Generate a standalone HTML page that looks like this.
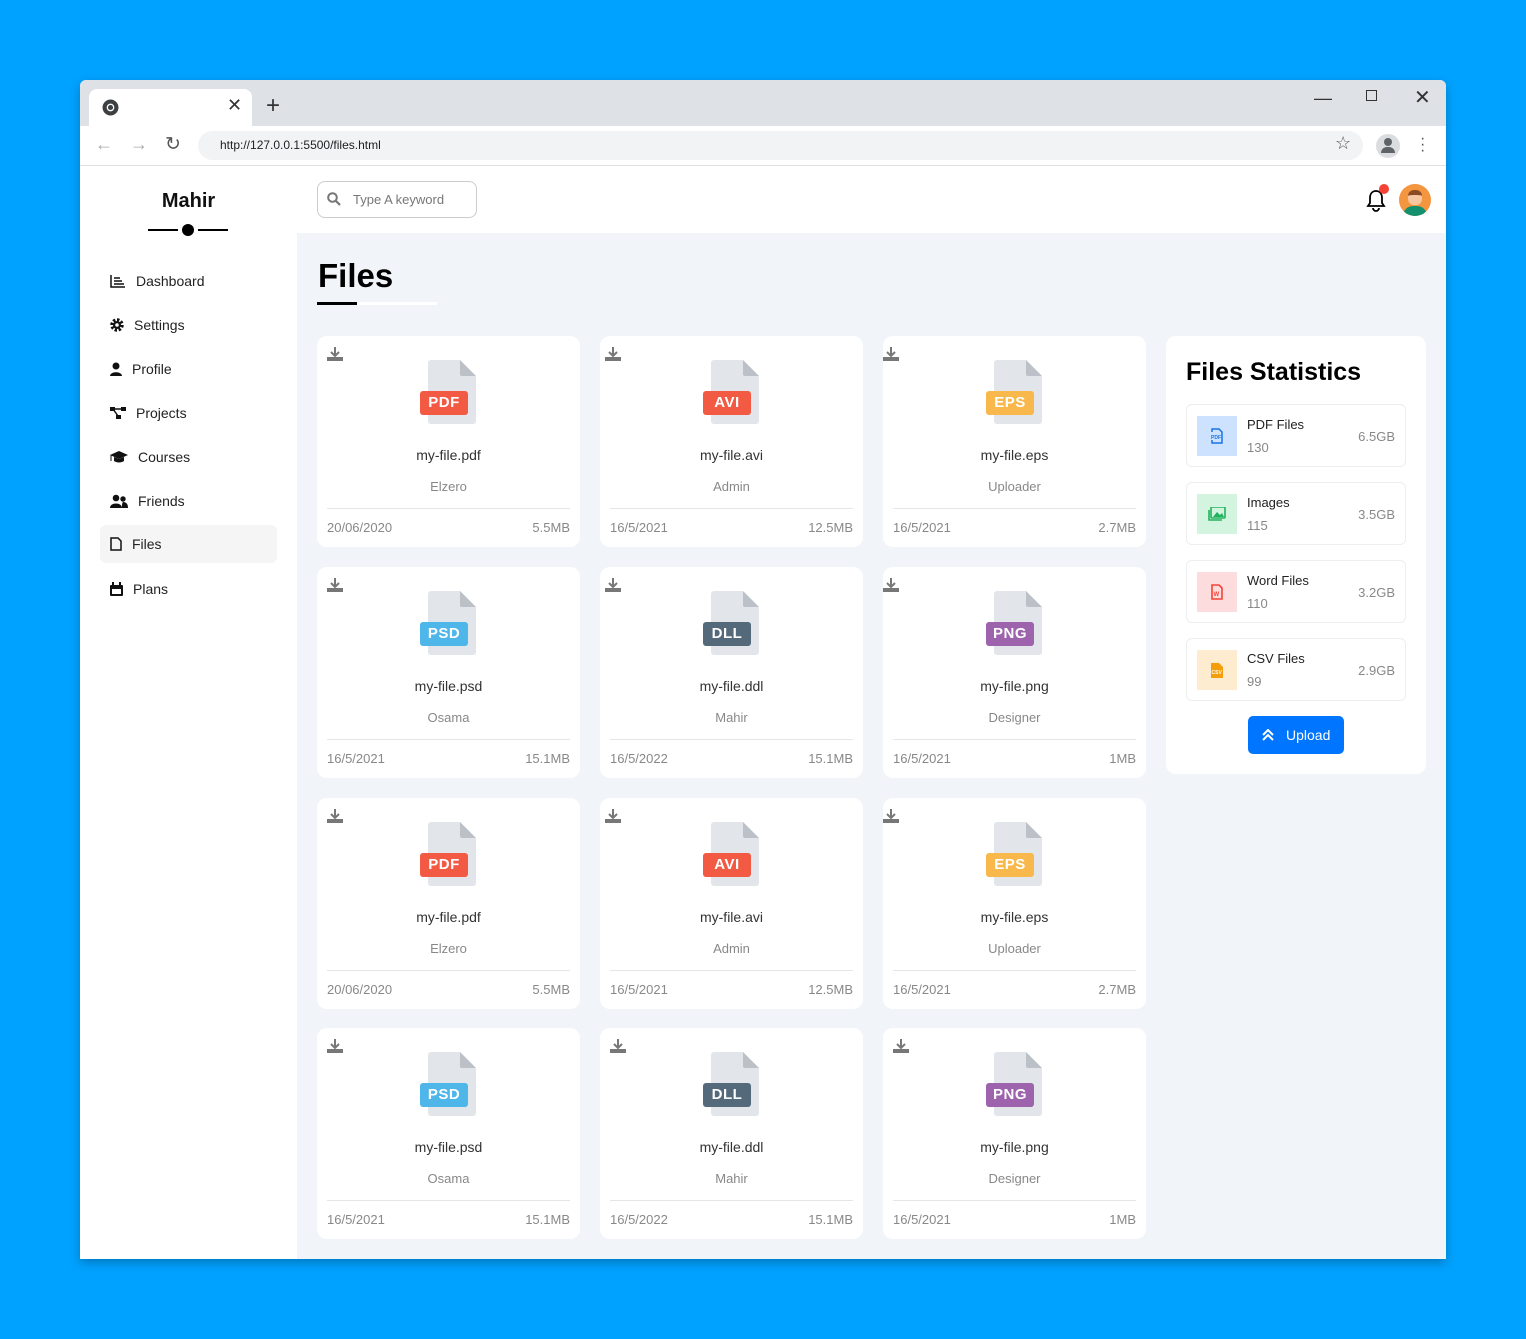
<!DOCTYPE html>
<html><head><meta charset="utf-8"><style>
*{box-sizing:border-box;margin:0;padding:0}
body{width:1526px;height:1339px;background:#00a2ff;font-family:"Liberation Sans",sans-serif;position:relative;overflow:hidden}
.win{position:absolute;left:80px;top:80px;width:1366px;height:1179px;background:#f1f5f9;box-shadow:0 4px 10px rgba(0,0,0,.25);border-radius:6px 6px 0 0;overflow:hidden}
.abs{position:absolute}
.tabbar{left:0;top:0;width:1366px;height:46px;background:#dee1e6}
.tab{left:9px;top:9px;width:163px;height:37px;background:#fff;border-radius:8px 8px 0 0}
.addr{left:0;top:46px;width:1366px;height:40px;background:#fff;border-bottom:1px solid #e0e0e0}
.pill{left:118px;top:5px;width:1165px;height:29px;background:#f1f3f4;border-radius:15px;font-size:12px;color:#202124;padding:7px 0 0 22px}
.side{left:0;top:86px;width:217px;height:1093px;background:#fff}
.nav{position:absolute;left:20px;width:177px;height:38px;font-size:14px;color:#222;display:flex;align-items:center;padding-left:10px;border-radius:6px}
.nav svg{margin-right:10px}
.head{left:217px;top:86px;width:1149px;height:67px;background:#fff}
.card{position:absolute;width:263px;height:211px;background:#fff;border-radius:10px}
.dl{position:absolute;left:10px;top:11px}
.c2 .dl{left:5px}
.c3 .dl{left:0}
.doc{position:absolute;left:111px;top:24px;width:48px;height:64px;background:#e2e5e9;border-radius:3px;clip-path:polygon(0 0,32px 0,48px 16px,48px 64px,0 64px)}
.fold{position:absolute;left:143px;top:24px;width:16px;height:16px;background:#bcc1c8;clip-path:polygon(0 0,100% 100%,0 100%);border-radius:0 0 0 2px}
.bd{position:absolute;left:103px;top:55px;width:48px;height:24px;border-radius:3px;color:#fff;font-weight:bold;font-size:15px;text-align:center;line-height:24px;letter-spacing:.5px}
.nm{position:absolute;left:0;width:263px;top:111px;text-align:center;font-size:14px;color:#333}
.sb{position:absolute;left:0;width:263px;top:143px;text-align:center;font-size:13px;color:#888}
.ln{position:absolute;left:10px;right:10px;top:172px;border-top:1px solid #e6e6e6}
.ft{position:absolute;left:10px;right:10px;top:184px;font-size:13px;color:#888;display:flex;justify-content:space-between}
.stats{left:1086px;top:256px;width:260px;height:438px;background:#fff;border-radius:10px}
.si{position:absolute;left:20px;width:220px;height:63px;border:1px solid #eee;border-radius:6px}
.si .ic{position:absolute;left:10px;top:11px;width:40px;height:40px;display:flex;align-items:center;justify-content:center}
.si .t{position:absolute;left:60px;top:12px;font-size:13px;color:#222}
.si .c{position:absolute;left:60px;top:35px;font-size:13px;color:#888}
.si .s{position:absolute;right:10px;top:24px;font-size:13px;color:#888}
</style></head><body>
<div class="win">
<div class="abs tabbar"></div>
<div class="abs tab"></div>
<svg class="abs" style="left:22px;top:19px" width="17" height="17" viewBox="0 0 16 16"><circle cx="8" cy="8" r="7.5" fill="#3c4043"/><circle cx="8" cy="8" r="3.6" fill="#fff"/><circle cx="8" cy="8" r="2.4" fill="#3c4043"/></svg>
<div class="abs" style="left:147px;top:15px;font-size:18px;color:#333">✕</div>
<div class="abs" style="left:186px;top:12px;font-size:24px;color:#333">+</div>
<div class="abs" style="left:1234px;top:8px;font-size:18px;color:#333">—</div>
<div class="abs" style="left:1286px;top:10px;width:11px;height:11px;border:1.5px solid #333"></div>
<div class="abs" style="left:1334px;top:5px;font-size:20px;color:#333">✕</div>
<div class="abs addr"><div class="abs pill">http://127.0.0.1:5500/files.html</div>
<div class="abs" style="left:15px;top:8px;font-size:18px;color:#aaa">←</div>
<div class="abs" style="left:50px;top:8px;font-size:18px;color:#aaa">→</div>
<div class="abs" style="left:85px;top:7px;font-size:19px;color:#555">↻</div>
<div class="abs" style="left:1255px;top:7px;font-size:18px;color:#555">☆</div>
<div class="abs" style="left:1296px;top:8px;width:24px;height:24px;border-radius:50%;background:#dadce0"></div>
<div class="abs" style="left:1304px;top:12px;width:8px;height:8px;border-radius:50%;background:#5f6368"></div>
<div class="abs" style="left:1301px;top:21px;width:14px;height:6px;border-radius:7px 7px 0 0;background:#5f6368"></div>
<div class="abs" style="left:1340px;top:10px;font-size:16px;color:#555;line-height:6px">·<br>·<br>·</div>
</div>
<div class="abs side">
<div class="abs" style="left:0;width:217px;top:24px;text-align:center;font-size:20px;font-weight:bold;color:#111">Mahir</div>
<div class="abs" style="left:68px;top:63px;width:30px;height:2px;background:#000"></div>
<div class="abs" style="left:102px;top:58px;width:12px;height:12px;border-radius:50%;background:#000"></div>
<div class="abs" style="left:118px;top:63px;width:30px;height:2px;background:#000"></div>
<div class="nav" style="top:96px"><svg width="16" height="14"><path d="M1 1V13H15M4 4h6M4 7h8M4 10h10" stroke="#111" stroke-width="1.5" fill="none"/></svg>Dashboard</div>
<div class="nav" style="top:140px"><svg width="14" height="14" viewBox="0 0 14 14"><circle cx="7" cy="7" r="5" fill="none" stroke="#111" stroke-width="3.5" stroke-dasharray="2.3 1.6"/><circle cx="7" cy="7" r="4" fill="#111"/><circle cx="7" cy="7" r="1.8" fill="#fff"/></svg>Settings</div>
<div class="nav" style="top:184px"><svg width="12" height="14"><circle cx="6" cy="4" r="3.5" fill="#111"/><path d="M0 14c0-5 12-5 12 0z" fill="#111"/></svg>Profile</div>
<div class="nav" style="top:228px"><svg width="16" height="14"><rect x="0" y="1" width="5" height="4" fill="#111"/><rect x="11" y="1" width="5" height="4" fill="#111"/><rect x="6" y="9" width="5" height="4" fill="#111"/><path d="M3 3h10M3 3l5 7" stroke="#111" stroke-width="1.5"/></svg>Projects</div>
<div class="nav" style="top:272px"><svg width="18" height="14"><path d="M0 5l9-4 9 4-9 4z" fill="#111"/><path d="M4 7v4c3 2 7 2 10 0V7l-5 2z" fill="#111"/><path d="M1 5v6" stroke="#111"/></svg>Courses</div>
<div class="nav" style="top:316px"><svg width="18" height="14"><circle cx="6" cy="4" r="3.3" fill="#111"/><circle cx="13" cy="5" r="2.7" fill="#111"/><path d="M0 14c0-6 12-6 12 0zM12 14c0-3 0-5 1-6 4 0 5 3 5 6z" fill="#111"/></svg>Friends</div>
<div class="nav" style="top:359px;background:#f5f5f5"><svg width="12" height="14"><path d="M1 1h7l3 3v9H1z" fill="none" stroke="#111" stroke-width="1.5"/></svg>Files</div>
<div class="nav" style="top:404px"><svg width="13" height="14"><rect x="0" y="3" width="13" height="11" rx="1" fill="#111"/><rect x="2" y="7" width="9" height="5" fill="#fff"/><path d="M3 0v4M10 0v4" stroke="#111" stroke-width="2"/></svg>Plans</div>
</div>
<div class="abs head">
<div class="abs" style="left:20px;top:15px;width:160px;height:37px;border:1px solid #ccc;border-radius:8px"></div>
<svg class="abs" style="left:30px;top:26px" width="14" height="14"><circle cx="5.5" cy="5.5" r="4.3" stroke="#777" stroke-width="2" fill="none"/><path d="M8.5 8.5l4.5 4.5" stroke="#777" stroke-width="2.2"/></svg>
<div class="abs" style="left:56px;top:26px;font-size:13px;color:#777">Type A keyword</div>
<svg class="abs" style="left:1068px;top:22px" width="22" height="24"><path d="M11 3c-4 0-6 3-6 7v5l-2 3h16l-2-3v-5c0-4-2-7-6-7z" fill="none" stroke="#000" stroke-width="1.8"/><path d="M8 20a3 3 0 006 0" fill="none" stroke="#000" stroke-width="1.8"/></svg>
<div class="abs" style="left:1082px;top:18px;width:10px;height:10px;border-radius:50%;background:#f44336"></div>
<div class="abs" style="left:1102px;top:18px;width:32px;height:32px;border-radius:50%;background:#f4953f;overflow:hidden"><div class="abs" style="left:9px;top:6px;width:14px;height:15px;border-radius:6px;background:#f6c7a0;border-top:5px solid #8a4a22"></div><div class="abs" style="left:4px;top:22px;width:24px;height:14px;border-radius:10px 10px 0 0;background:#13906e"></div></div>
</div>
<div class="abs" style="left:238px;top:177px;font-size:33px;font-weight:bold;color:#000">Files</div>
<div class="abs" style="left:237px;top:222px;width:120px;height:3px;background:#fff"></div>
<div class="abs" style="left:237px;top:222px;width:40px;height:3px;background:#000"></div>

<div class="card" style="left:237px;top:256px"><svg class="dl" width="16" height="14"><path d="M8 0v8M4 5l4 4 4-4" stroke="#777" stroke-width="2" fill="none"/><rect x="0" y="10" width="16" height="4" fill="#777"/></svg><div class="doc"></div><div class="fold"></div><div class="bd" style="background:#f25a43">PDF</div><div class="nm">my-file.pdf</div><div class="sb">Elzero</div><div class="ln"></div><div class="ft"><span>20/06/2020</span><span>5.5MB</span></div></div>
<div class="card c2" style="left:520px;top:256px"><svg class="dl" width="16" height="14"><path d="M8 0v8M4 5l4 4 4-4" stroke="#777" stroke-width="2" fill="none"/><rect x="0" y="10" width="16" height="4" fill="#777"/></svg><div class="doc"></div><div class="fold"></div><div class="bd" style="background:#f25a43">AVI</div><div class="nm">my-file.avi</div><div class="sb">Admin</div><div class="ln"></div><div class="ft"><span>16/5/2021</span><span>12.5MB</span></div></div>
<div class="card c3" style="left:803px;top:256px"><svg class="dl" width="16" height="14"><path d="M8 0v8M4 5l4 4 4-4" stroke="#777" stroke-width="2" fill="none"/><rect x="0" y="10" width="16" height="4" fill="#777"/></svg><div class="doc"></div><div class="fold"></div><div class="bd" style="background:#f8b84b">EPS</div><div class="nm">my-file.eps</div><div class="sb">Uploader</div><div class="ln"></div><div class="ft"><span>16/5/2021</span><span>2.7MB</span></div></div>

<div class="card" style="left:237px;top:487px"><svg class="dl" width="16" height="14"><path d="M8 0v8M4 5l4 4 4-4" stroke="#777" stroke-width="2" fill="none"/><rect x="0" y="10" width="16" height="4" fill="#777"/></svg><div class="doc"></div><div class="fold"></div><div class="bd" style="background:#4eb6e8">PSD</div><div class="nm">my-file.psd</div><div class="sb">Osama</div><div class="ln"></div><div class="ft"><span>16/5/2021</span><span>15.1MB</span></div></div>
<div class="card c2" style="left:520px;top:487px"><svg class="dl" width="16" height="14"><path d="M8 0v8M4 5l4 4 4-4" stroke="#777" stroke-width="2" fill="none"/><rect x="0" y="10" width="16" height="4" fill="#777"/></svg><div class="doc"></div><div class="fold"></div><div class="bd" style="background:#546a7b">DLL</div><div class="nm">my-file.ddl</div><div class="sb">Mahir</div><div class="ln"></div><div class="ft"><span>16/5/2022</span><span>15.1MB</span></div></div>
<div class="card c3" style="left:803px;top:487px"><svg class="dl" width="16" height="14"><path d="M8 0v8M4 5l4 4 4-4" stroke="#777" stroke-width="2" fill="none"/><rect x="0" y="10" width="16" height="4" fill="#777"/></svg><div class="doc"></div><div class="fold"></div><div class="bd" style="background:#9d63ac">PNG</div><div class="nm">my-file.png</div><div class="sb">Designer</div><div class="ln"></div><div class="ft"><span>16/5/2021</span><span>1MB</span></div></div>

<div class="card" style="left:237px;top:718px"><svg class="dl" width="16" height="14"><path d="M8 0v8M4 5l4 4 4-4" stroke="#777" stroke-width="2" fill="none"/><rect x="0" y="10" width="16" height="4" fill="#777"/></svg><div class="doc"></div><div class="fold"></div><div class="bd" style="background:#f25a43">PDF</div><div class="nm">my-file.pdf</div><div class="sb">Elzero</div><div class="ln"></div><div class="ft"><span>20/06/2020</span><span>5.5MB</span></div></div>
<div class="card c2" style="left:520px;top:718px"><svg class="dl" width="16" height="14"><path d="M8 0v8M4 5l4 4 4-4" stroke="#777" stroke-width="2" fill="none"/><rect x="0" y="10" width="16" height="4" fill="#777"/></svg><div class="doc"></div><div class="fold"></div><div class="bd" style="background:#f25a43">AVI</div><div class="nm">my-file.avi</div><div class="sb">Admin</div><div class="ln"></div><div class="ft"><span>16/5/2021</span><span>12.5MB</span></div></div>
<div class="card c3" style="left:803px;top:718px"><svg class="dl" width="16" height="14"><path d="M8 0v8M4 5l4 4 4-4" stroke="#777" stroke-width="2" fill="none"/><rect x="0" y="10" width="16" height="4" fill="#777"/></svg><div class="doc"></div><div class="fold"></div><div class="bd" style="background:#f8b84b">EPS</div><div class="nm">my-file.eps</div><div class="sb">Uploader</div><div class="ln"></div><div class="ft"><span>16/5/2021</span><span>2.7MB</span></div></div>

<div class="card" style="left:237px;top:948px"><svg class="dl" width="16" height="14"><path d="M8 0v8M4 5l4 4 4-4" stroke="#777" stroke-width="2" fill="none"/><rect x="0" y="10" width="16" height="4" fill="#777"/></svg><div class="doc"></div><div class="fold"></div><div class="bd" style="background:#4eb6e8">PSD</div><div class="nm">my-file.psd</div><div class="sb">Osama</div><div class="ln"></div><div class="ft"><span>16/5/2021</span><span>15.1MB</span></div></div>
<div class="card" style="left:520px;top:948px"><svg class="dl" width="16" height="14"><path d="M8 0v8M4 5l4 4 4-4" stroke="#777" stroke-width="2" fill="none"/><rect x="0" y="10" width="16" height="4" fill="#777"/></svg><div class="doc"></div><div class="fold"></div><div class="bd" style="background:#546a7b">DLL</div><div class="nm">my-file.ddl</div><div class="sb">Mahir</div><div class="ln"></div><div class="ft"><span>16/5/2022</span><span>15.1MB</span></div></div>
<div class="card" style="left:803px;top:948px"><svg class="dl" width="16" height="14"><path d="M8 0v8M4 5l4 4 4-4" stroke="#777" stroke-width="2" fill="none"/><rect x="0" y="10" width="16" height="4" fill="#777"/></svg><div class="doc"></div><div class="fold"></div><div class="bd" style="background:#9d63ac">PNG</div><div class="nm">my-file.png</div><div class="sb">Designer</div><div class="ln"></div><div class="ft"><span>16/5/2021</span><span>1MB</span></div></div>

<div class="abs stats">
<div class="abs" style="left:20px;top:22px;font-size:25px;font-weight:bold;color:#000">Files Statistics</div>
<div class="si" style="top:68px"><div class="ic" style="background:#cce2fe"><svg width="12" height="16"><path d="M1 4V1h7l3 3v11H1v-3" fill="none" stroke="#1a73e8" stroke-width="1.5"/><text x="0" y="11" font-size="5" font-weight="bold" fill="#1a73e8" font-family="Liberation Sans">PDF</text></svg></div><div class="t">PDF Files</div><div class="c">130</div><div class="s">6.5GB</div></div>
<div class="si" style="top:146px"><div class="ic" style="background:#d3f4de"><svg width="18" height="14"><rect x="3" y="0" width="14" height="11" rx="1" fill="none" stroke="#22b35e" stroke-width="1.6"/><path d="M1 3v10h13" fill="none" stroke="#22b35e" stroke-width="1.6"/><path d="M5 10l4-5 3 3 2-2 2 4z" fill="#22b35e"/></svg></div><div class="t">Images</div><div class="c">115</div><div class="s">3.5GB</div></div>
<div class="si" style="top:224px"><div class="ic" style="background:#fcdcdc"><svg width="12" height="16"><path d="M1 1h7l3 3v11H1z" fill="none" stroke="#f44336" stroke-width="1.6"/><text x="2.5" y="12" font-size="6" font-weight="bold" fill="#f44336" font-family="Liberation Sans">W</text></svg></div><div class="t">Word Files</div><div class="c">110</div><div class="s">3.2GB</div></div>
<div class="si" style="top:302px"><div class="ic" style="background:#feecd0"><svg width="12" height="16"><path d="M0 1h8l4 4v11H0z" fill="#f59e0b"/><text x="0.5" y="12" font-size="5" font-weight="bold" fill="#fff" font-family="Liberation Sans">CSV</text></svg></div><div class="t">CSV Files</div><div class="c">99</div><div class="s">2.9GB</div></div>
<div class="abs" style="left:82px;top:380px;width:96px;height:38px;background:#0075ff;border-radius:5px;color:#fff;font-size:14px;line-height:38px;padding-left:38px">Upload</div>
<svg class="abs" style="left:96px;top:393px" width="12" height="12"><path d="M1 6l5-5 5 5M1 11l5-5 5 5" stroke="#fff" stroke-width="2" fill="none"/></svg>
</div>
</div>
</body></html>
